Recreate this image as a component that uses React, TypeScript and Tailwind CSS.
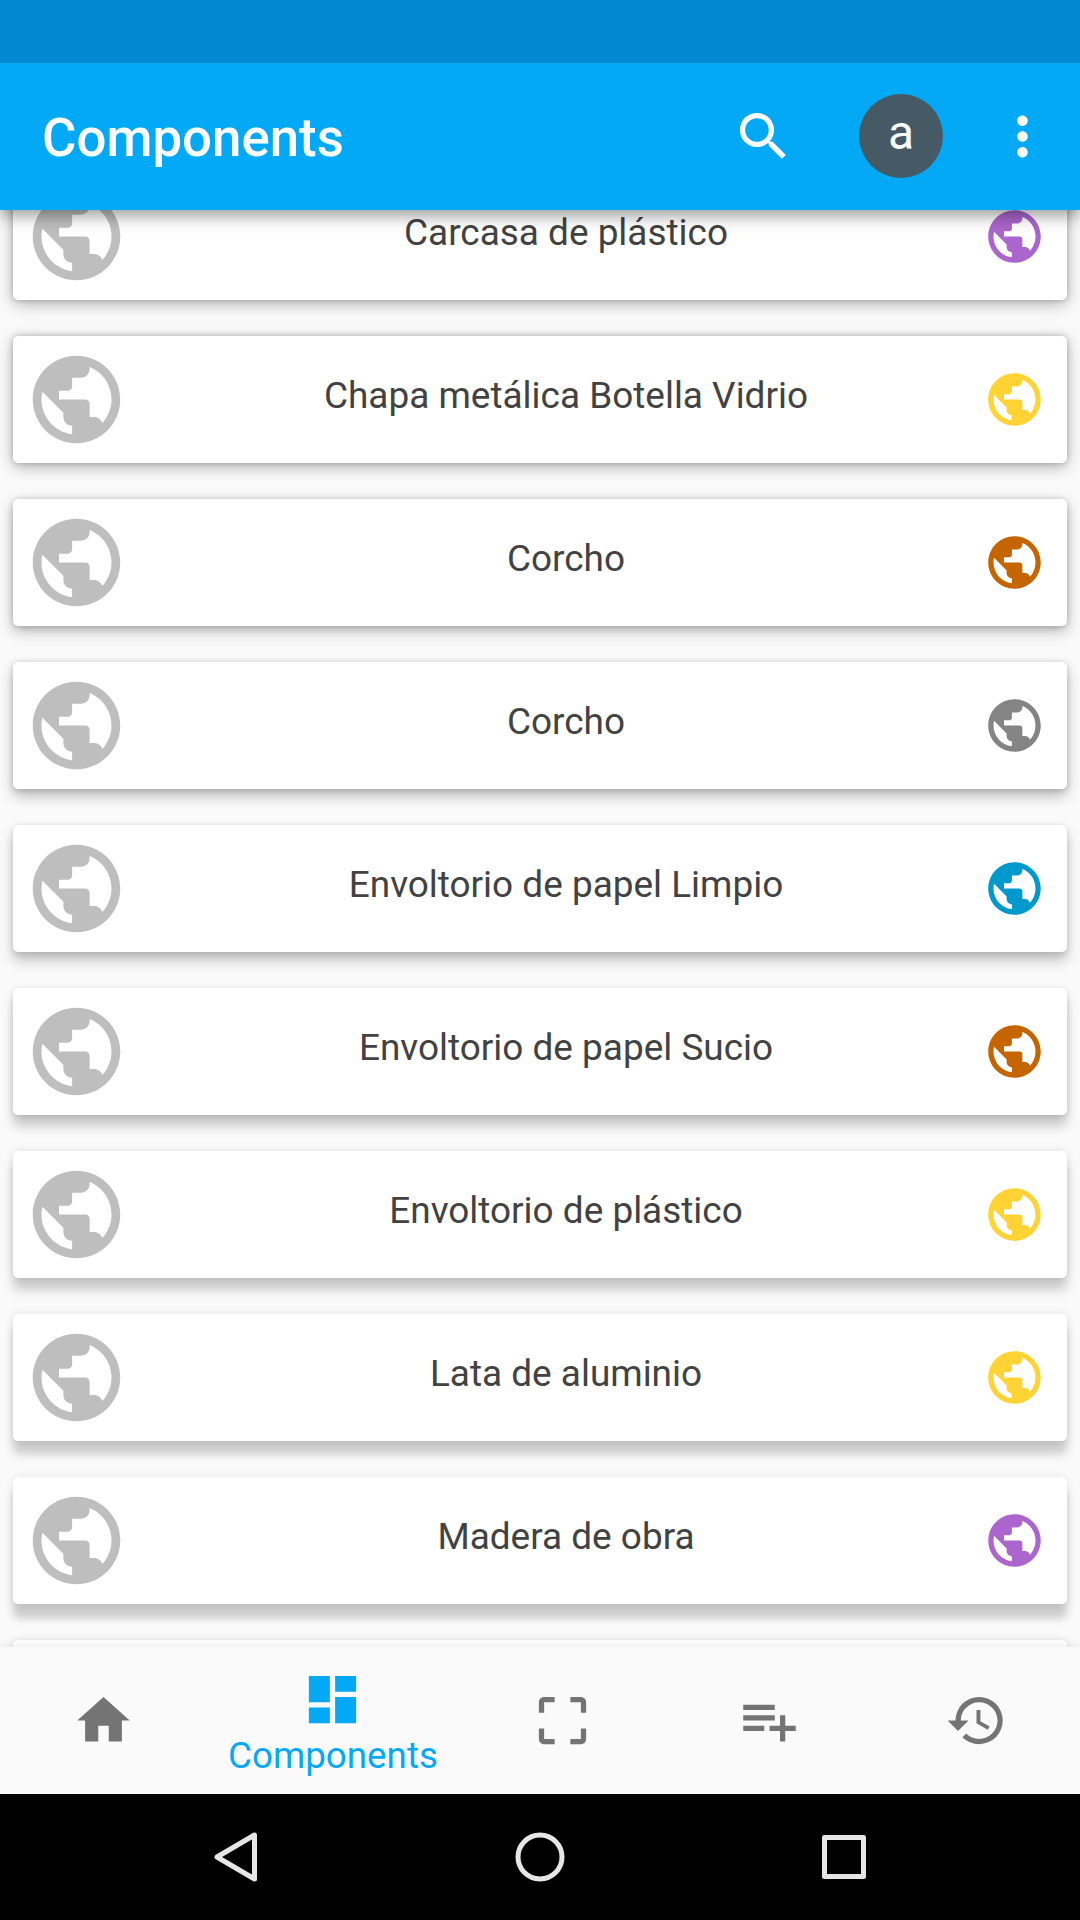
import { MdPublic, MdSearch, MdMoreVert, MdHome, MdDashboard, MdCropFree, MdHistory } from "react-icons/md";

type Item = { name: string; color: string; shadow: string };

const items: Item[] = [
  { name: "Carcasa de plástico", color: "text-[#aa66cc]", shadow: "shadow-[0_4px_16px_rgba(0,0,0,0.28),0_0_6px_rgba(0,0,0,0.22)]" },
  { name: "Chapa metálica Botella Vidrio", color: "text-[#ffd333]", shadow: "shadow-[0_4px_16px_rgba(0,0,0,0.28),0_0_6px_rgba(0,0,0,0.22)]" },
  { name: "Corcho", color: "text-[#c56500]", shadow: "shadow-[0_5px_15px_rgba(0,0,0,0.27),0_1px_6px_rgba(0,0,0,0.2)]" },
  { name: "Corcho", color: "text-[#848484]", shadow: "shadow-[0_7px_14px_rgba(0,0,0,0.25),0_1px_6px_rgba(0,0,0,0.18)]" },
  { name: "Envoltorio de papel Limpio", color: "text-[#0099cc]", shadow: "shadow-[0_9px_13px_rgba(0,0,0,0.22),0_1px_6px_rgba(0,0,0,0.15)]" },
  { name: "Envoltorio de papel Sucio", color: "text-[#c56500]", shadow: "shadow-[0_11px_12px_rgba(0,0,0,0.2),0_1px_6px_rgba(0,0,0,0.13)]" },
  { name: "Envoltorio de plástico", color: "text-[#ffd333]", shadow: "shadow-[0_12px_11px_rgba(0,0,0,0.19),0_0_8px_rgba(0,0,0,0.11)]" },
  { name: "Lata de aluminio", color: "text-[#ffd333]", shadow: "shadow-[0_13px_10px_rgba(0,0,0,0.19),0_0_8px_rgba(0,0,0,0.1)]" },
  { name: "Madera de obra", color: "text-[#aa66cc]", shadow: "shadow-[0_14px_9px_rgba(0,0,0,0.19),0_0_8px_rgba(0,0,0,0.09)]" },
  { name: "", color: "text-transparent", shadow: "shadow-[0_0_8px_rgba(0,0,0,0.12)]" },
];

function Card({ item }: { item: Item }) {
  return (
    <li className={`flex h-[127px] shrink-0 items-center rounded-[5px] bg-white pl-[11px] pr-[21px] ${item.shadow}`}>
      <MdPublic className="size-[105px] shrink-0 text-[#bebebe]" />
      <span className="flex-1 pb-[9px] pl-[20px] text-center text-[36.95px] leading-[43px] text-[#424242]">{item.name}</span>
      <MdPublic className={`size-[63px] shrink-0 ${item.color}`} />
    </li>
  );
}

function PlaylistAddIcon() {
  return (
    <svg className="size-[63px]" viewBox="0 0 24 24" fill="currentColor">
      <path d="M14 10H2v2h12v-2zm0-4H2v2h12V6zm4 8v-4h-2v4h-4v2h4v4h2v-4h4v-2h-4zM2 16h8v-2H2v2z" />
    </svg>
  );
}

export default function App() {
  return (
    <div className="flex h-[1920px] w-[1080px] flex-col overflow-hidden bg-[#fafafa] font-['Roboto',sans-serif]">
      <div className="relative z-20 h-[63px] shrink-0 bg-[#0288d1]" />
      <header className="z-10 flex h-[147px] shrink-0 items-center bg-[#03a9f4] pl-[42px] pr-[26px] text-white shadow-[0_5px_16px_rgba(0,0,0,0.42)]">
        <h1 className="flex-1 pt-[3px] text-[52.8px] font-medium leading-[62px]">Components</h1>
        <MdSearch className="size-[63px]" />
        <div className="mb-[1px] ml-[64px] mr-[48px] flex size-[84px] items-center justify-center rounded-full bg-[#455a64] pb-[7px] text-[48px] leading-none">a</div>
        <MdMoreVert className="size-[63px]" />
      </header>
      <main className="h-[1437px] shrink-0 overflow-hidden px-[13px]">
        <ul className="-mt-[37px] flex flex-col gap-[36px]">
          {items.map((item, i) => <Card key={i} item={item} />)}
        </ul>
      </main>
      <nav className="z-10 flex h-[147px] shrink-0 bg-[#fafafa] text-[#747474] shadow-[0_0_10px_rgba(0,0,0,0.1)]">
        <div className="flex w-[207px] items-center justify-center"><MdHome className="size-[63px]" /></div>
        <div className="flex w-[252px] flex-col items-center pt-[21px] text-[#03a9f4]">
          <MdDashboard className="mr-[2px] size-[63px]" />
          <span className="mt-[3px] text-[36.75px] leading-[43px]">Components</span>
        </div>
        <div className="flex w-[207px] items-center justify-center"><MdCropFree className="size-[63px]" /></div>
        <div className="flex w-[207px] items-center justify-center pr-[1px]"><PlaylistAddIcon /></div>
        <div className="flex w-[207px] items-center justify-center"><MdHistory className="size-[63px]" /></div>
      </nav>
      <div className="flex h-[126px] shrink-0 items-center justify-between bg-black px-[206px]">
        <svg className="size-[60px]" viewBox="0 0 60 60" fill="none" stroke="#e6e6e6" strokeWidth="5" strokeLinejoin="round">
          <path d="M11 30 48.5 8V52Z" />
        </svg>
        <svg className="size-[60px]" viewBox="0 0 60 60" fill="none" stroke="#e6e6e6" strokeWidth="5">
          <circle cx="30" cy="30" r="22" />
        </svg>
        <svg className="size-[60px]" viewBox="0 0 60 60" fill="none" stroke="#e6e6e6" strokeWidth="5" strokeLinejoin="round">
          <rect x="10.5" y="10.5" width="39" height="39" />
        </svg>
      </div>
    </div>
  );
}
